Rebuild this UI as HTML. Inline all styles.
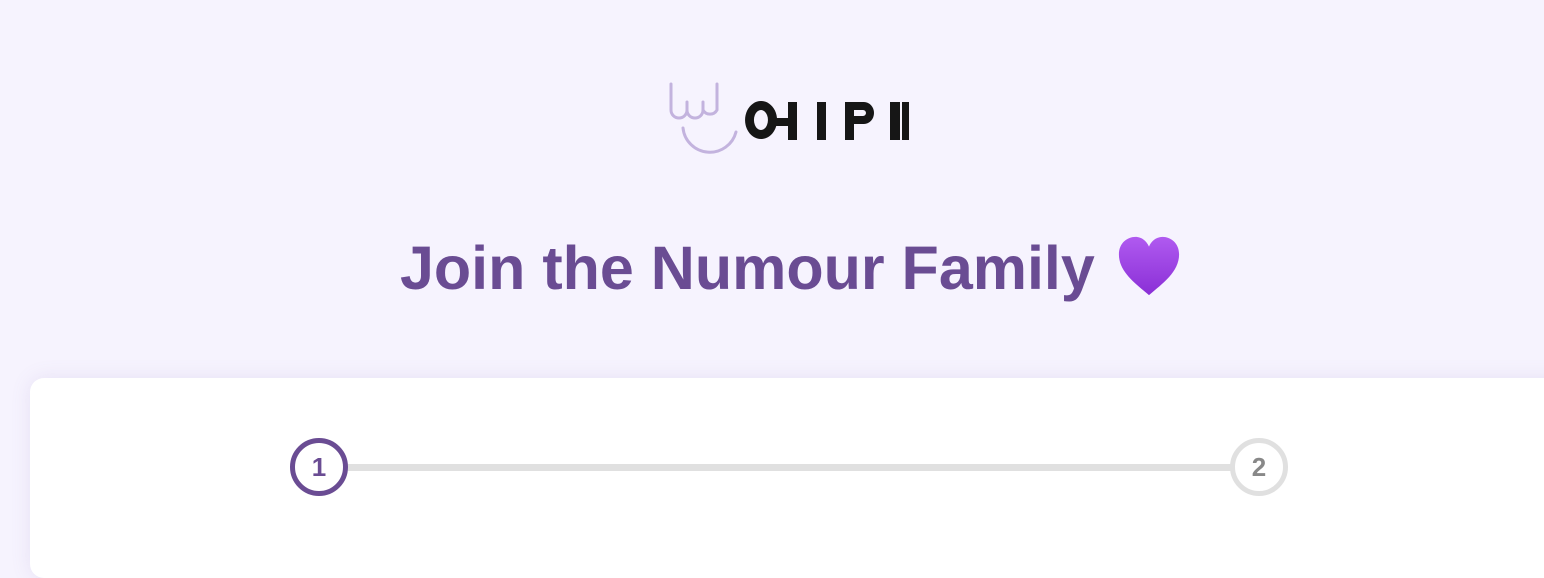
<!DOCTYPE html>
<html><head><meta charset="utf-8"><style>
html,body{margin:0;padding:0;}
body{width:1544px;height:526px;overflow:hidden;background:#f6f3fe;position:relative;font-family:"Liberation Sans",sans-serif;}
.title{position:absolute;left:400px;top:228px;font-size:61px;font-weight:bold;color:#6a4c93;white-space:nowrap;letter-spacing:0px;line-height:80px;}
.card{position:absolute;left:30px;top:378px;width:1560px;height:200px;background:#fff;border-radius:14px;box-shadow:0 0 20px rgba(120,100,170,0.12);}
.line{position:absolute;left:348px;top:464px;width:884px;height:7px;background:#e0e0e0;}
.c{position:absolute;width:48px;height:48px;border-radius:50%;background:#fff;font-weight:bold;font-size:26px;text-align:center;line-height:48px;box-sizing:content-box;}
</style></head><body>
<svg style="position:absolute;left:660px;top:70px" width="260" height="100" viewBox="0 0 260 100">
<g fill="none" stroke="#c3b3de" stroke-width="3" stroke-linecap="round">
<path d="M11 14 V40 a8 8 0 0 0 16 0 V32 M27 40 a8 8 0 0 0 16 0 V32"/>
<path d="M43 40 a8 8 0 0 0 14 0 V14"/>
<path d="M23 58 a27 27 0 0 0 53 4"/>
</g>
<g fill="#161616">
<path d="M101 31 a16 19 0 1 0 0.1 0 Z M101 40 a7 10 0 1 1 -0.1 0 Z" fill-rule="evenodd"/>
<rect x="115" y="48" width="14" height="8"/>
<rect x="128" y="32" width="9" height="38"/>
<rect x="157" y="32" width="9" height="38"/>
<rect x="185" y="32" width="9" height="38"/>
<path d="M194 32 h10 a10 11 0 0 1 0 22 h-10 v-8 h9 a3 3 0 0 0 0 -6 h-9 Z"/>
<rect x="230" y="32" width="10" height="38"/>
<rect x="242" y="32" width="7" height="38"/>
</g>
</svg>
<div class="title">Join the Numour Family</div>
<svg style="position:absolute;left:1116px;top:234px" width="66" height="66" viewBox="0 0 68 66">
<defs><linearGradient id="g" x1="0" y1="0" x2="0" y2="1"><stop offset="0" stop-color="#b05af0"/><stop offset="1" stop-color="#8a2fd6"/></linearGradient></defs>
<path d="M34 62 C20 50 3 38 3 20 C3 8 12 2 20 2 C27 2 32 7 34 12 C36 7 41 2 48 2 C56 2 65 8 65 20 C65 38 48 50 34 62 Z" fill="url(#g)"/>
</svg>
<div class="card"></div>
<div class="line"></div>
<div class="c" style="left:290px;top:438px;border:5px solid #6a4c93;color:#6a4c93;">1</div>
<div class="c" style="left:1230px;top:438px;border:5px solid #e0e0e0;color:#888;">2</div>
</body></html>
